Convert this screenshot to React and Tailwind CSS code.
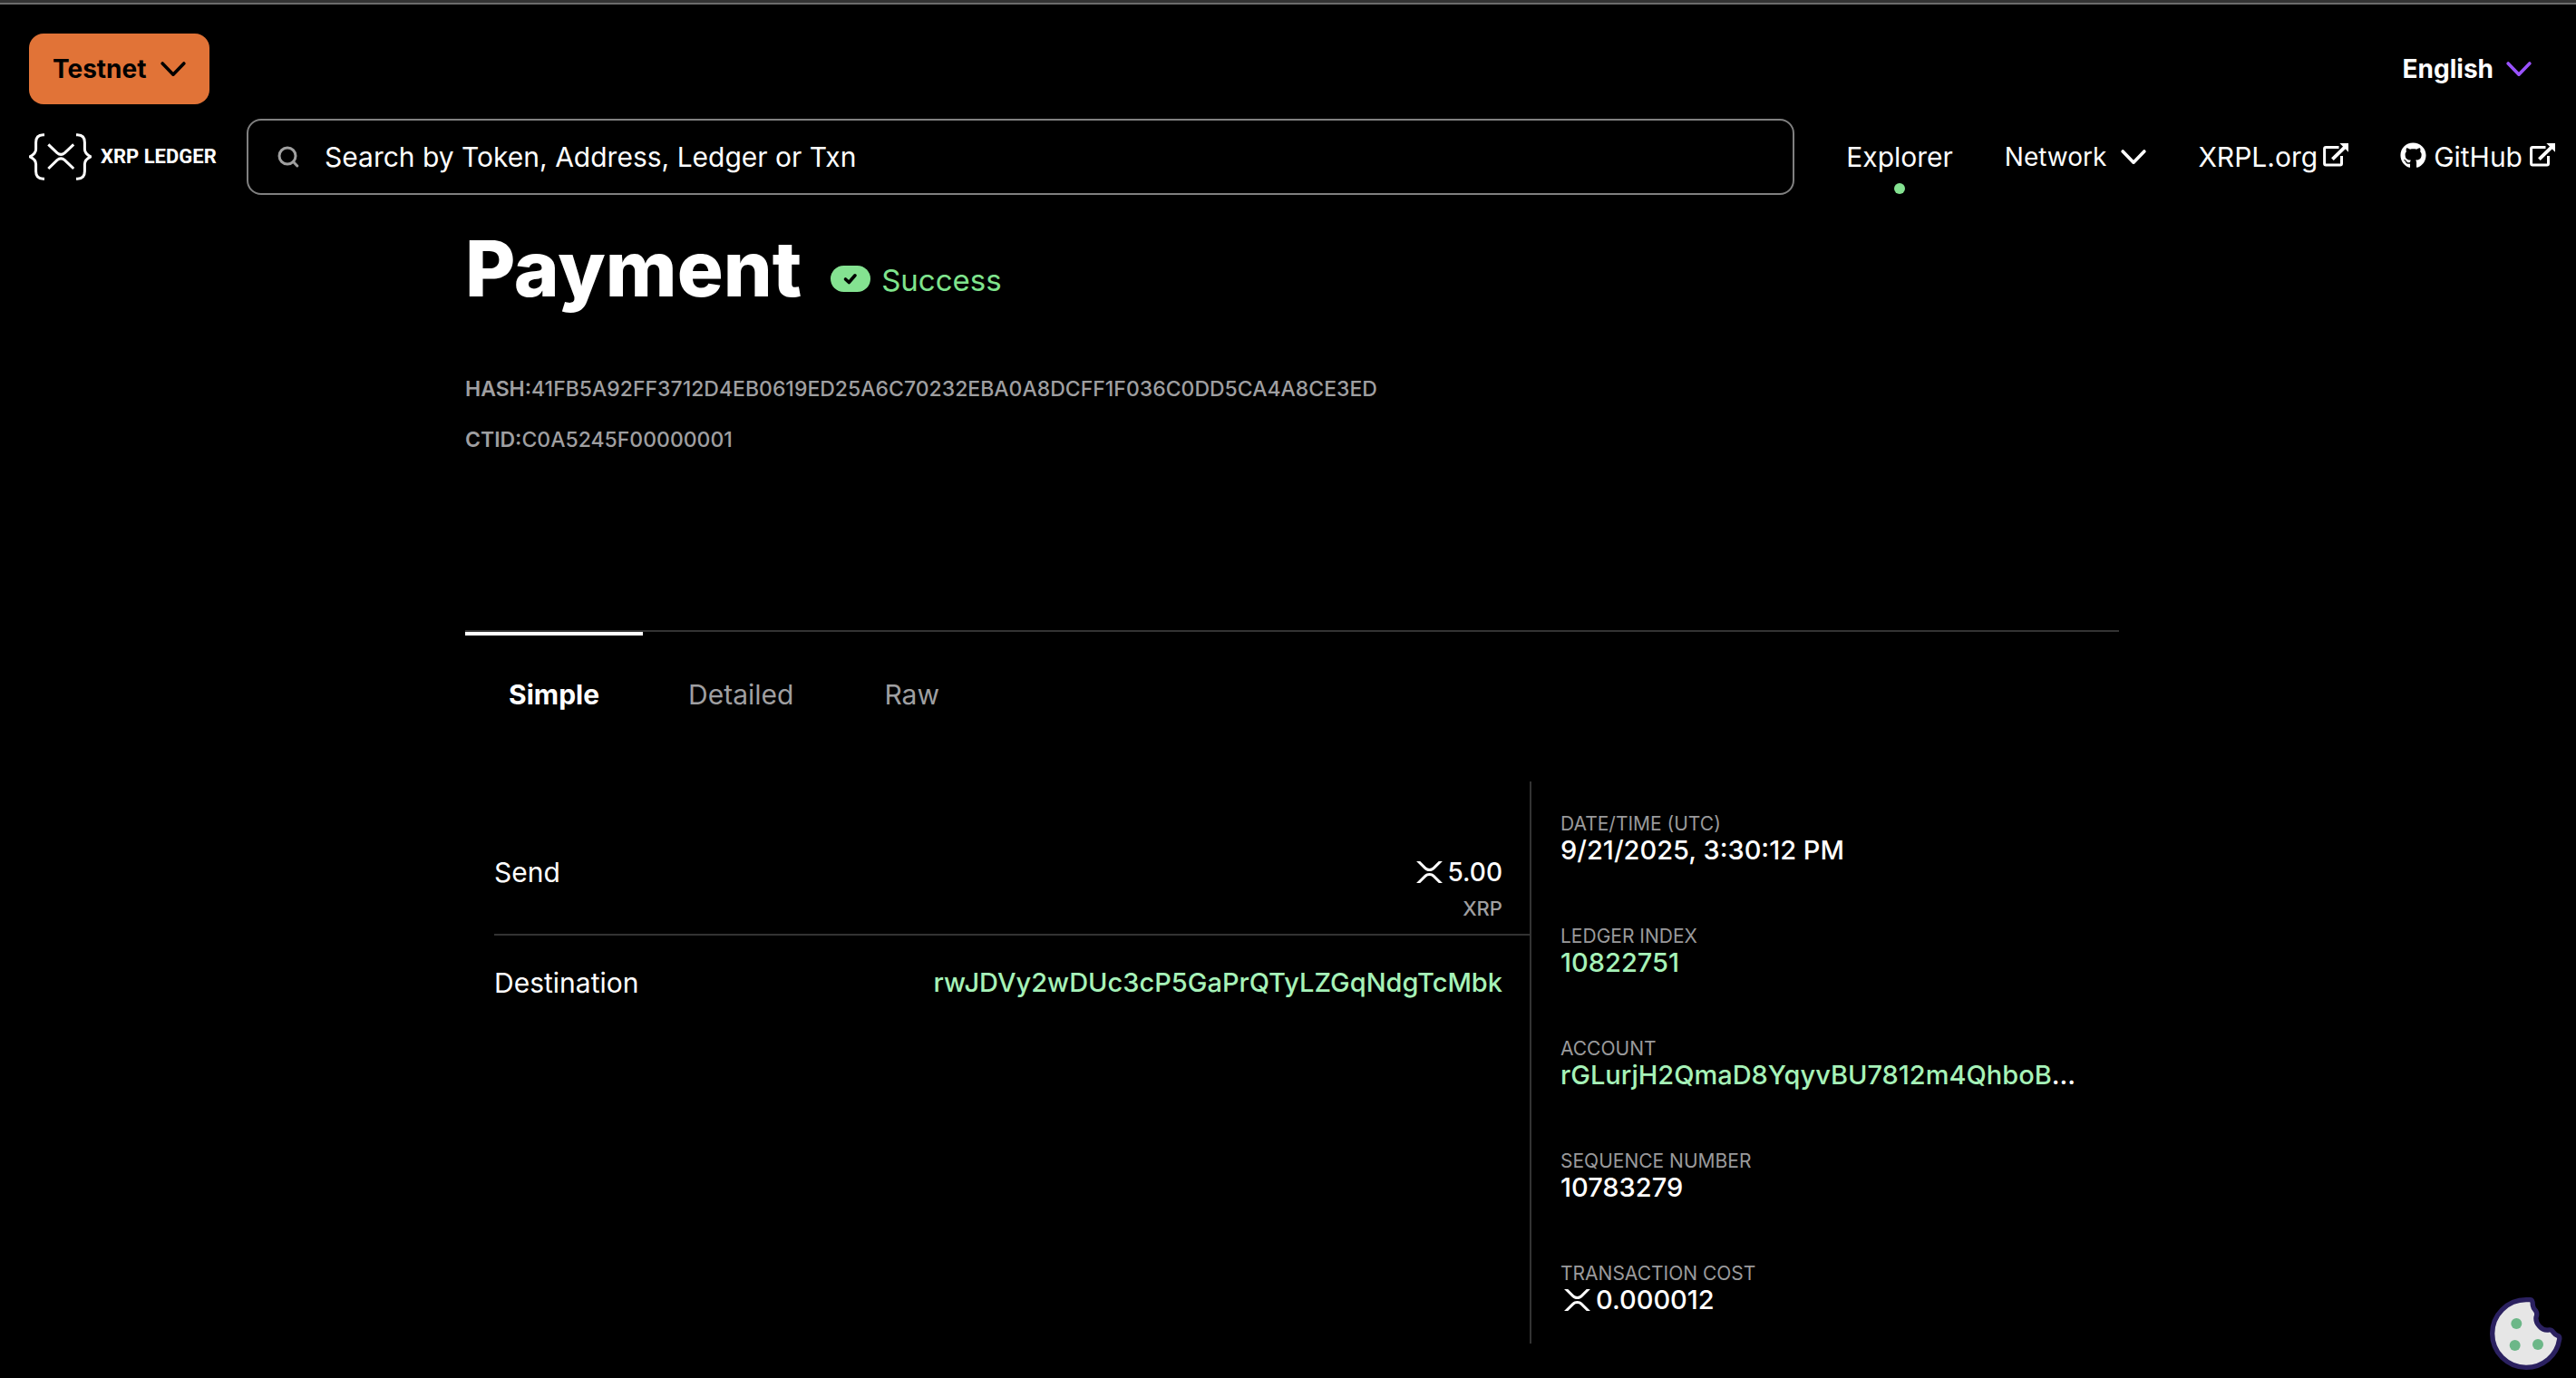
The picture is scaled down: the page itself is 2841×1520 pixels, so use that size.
import React from "react";
import { FaGithub } from "react-icons/fa";

function Chevron({ className = "" }) {
  return (
    <svg viewBox="0 0 28 18" className={`h-[18px] w-7 shrink-0 ${className}`} fill="none" stroke="currentColor" strokeWidth="3.6" strokeLinecap="round" strokeLinejoin="round" aria-hidden="true">
      <path d="M2.2 3 14 15.2 25.8 3" />
    </svg>
  );
}

function ExternalIcon() {
  return (
    <svg viewBox="0 0 28 26" className="mb-1 h-[26px] w-7 shrink-0" fill="none" stroke="currentColor" aria-hidden="true">
      <path d="M17.5 4.4H3.2Q1.6 4.4 1.6 6V22.6Q1.6 24 3.2 24H19Q20.5 24 20.5 22.6V14" strokeWidth="3" />
      <path d="M10.4 17.6 24 4.4" strokeWidth="3.8" />
      <path d="M18.4 0H28V9.8Z" fill="currentColor" stroke="none" />
    </svg>
  );
}

function XrpIcon() {
  return (
    <svg viewBox="0 0 512 424" className="h-6 w-[29px] shrink-0" fill="currentColor" aria-hidden="true">
      <path d="M437,0h74L357,152.48c-55.77,55.19-146.19,55.19-202,0L.94,0H75L192,115.83a91.11,91.11,0,0,0,127.91,0Z" />
      <path d="M74.05,424H0L155,270.58c55.77-55.19,146.19-55.19,202,0L512,424H438L320,307.23a91.11,91.11,0,0,0-127.91,0Z" />
    </svg>
  );
}

function Logo() {
  return (
    <a href="#home" className="flex w-[208px] shrink-0 items-center gap-[10px] text-white">
      <svg viewBox="0 0 69 52" className="h-[52px] w-[69px] shrink-0" fill="none" stroke="currentColor" strokeWidth="3" aria-hidden="true">
        <path d="M17 1.8H15.5Q7.6 2 7.6 10V17.5Q7.6 22.5 1 25.8Q7.6 29 7.6 34V42Q7.6 50 15.5 50.2H17" />
        <path d="M52 1.8H53.5Q61.4 2 61.4 10V17.5Q61.4 22.5 68 25.8Q61.4 29 61.4 34V42Q61.4 50 53.5 50.2H52" />
        <path d="M21.3 12.3 31 21.6Q35.2 25.2 39.4 21.6L49.2 12.3" />
        <path d="M21.3 39 31 29.7Q35.2 26.1 39.4 29.7L49.2 39" />
      </svg>
      <span className="font-[Roboto] text-[22px] leading-7 font-bold whitespace-nowrap">XRP LEDGER</span>
    </a>
  );
}

function Header() {
  return (
    <header className="flex flex-col gap-4 pt-8 pr-[23px] pl-8">
      <div className="flex items-center justify-between pr-[26px]">
        <button type="button" className="flex h-[78px] items-center gap-4 rounded-2xl bg-[#e17337] px-[26px] text-[28px] font-bold text-black">
          Testnet
          <Chevron />
        </button>
        <button type="button" className="flex items-center gap-[14px] text-[28px] font-bold">
          English
          <Chevron className="text-[#9a52ff]" />
        </button>
      </div>
      <div className="flex items-center">
        <Logo />
        <div className="ml-8 flex h-[84px] min-w-0 flex-1 items-center gap-7 rounded-2xl border-2 border-[#808080] px-8">
          <svg viewBox="0 0 24 24" className="size-6 shrink-0" fill="none" stroke="#a0a0a0" strokeWidth="3" strokeLinecap="round" aria-hidden="true">
            <circle cx="11" cy="11" r="9" />
            <path d="M17.5 17.5 21.8 22" />
          </svg>
          <input type="text" aria-label="Search by Token, Address, Ledger or Txn" placeholder="Search by Token, Address, Ledger or Txn" className="min-w-0 flex-1 bg-transparent text-[30px] text-white placeholder-white outline-none" />
        </div>
        <nav className="ml-[57px] flex items-center gap-[57px] text-[30px] leading-9">
          <a href="#explorer" className="relative">
            Explorer
            <span className="absolute top-[47px] left-1/2 size-3 -translate-x-1/2 rounded-full bg-[#84e291]" />
          </a>
          <button type="button" className="flex items-center gap-4 text-[28px]">
            Network
            <Chevron />
          </button>
          <a href="#xrpl" className="flex items-center gap-[6px]">
            XRPL.org
            <ExternalIcon />
          </a>
          <a href="#github" className="flex items-center gap-2">
            <FaGithub className="mb-1 size-[29px]" aria-hidden="true" />
            GitHub
            <ExternalIcon />
          </a>
        </nav>
      </div>
    </header>
  );
}

function Detail({ label, children }) {
  return (
    <div className="h-[124px] pt-8">
      <dt className="text-[21px] leading-[29px] text-[#9a9a9c] uppercase">{label}</dt>
      <dd className="flex items-center text-[29px] leading-[30px] font-medium whitespace-nowrap">{children}</dd>
    </div>
  );
}

function Transaction() {
  return (
    <main className="mx-auto w-full max-w-[1824px]">
      <div className="mt-[34px] flex items-center">
        <h1 className="text-[85px] leading-[96px] font-extrabold">Payment</h1>
        <div className="mt-6 ml-8 flex items-center gap-3 text-[33px] leading-10 text-[#7fe48d]">
          <svg viewBox="0 0 44 29" className="mb-1 h-[29px] w-11" aria-hidden="true">
            <rect width="44" height="29" rx="14.5" fill="#84e291" />
            <path d="M16.5 15 20.3 18.5 27 10.8" fill="none" stroke="#000" strokeWidth="3.6" strokeLinecap="round" strokeLinejoin="round" />
          </svg>
          Success
        </div>
      </div>
      <div className="mt-14 text-[23px] leading-[56px] font-medium text-[#9f9fa1]">
        <div><span className="font-semibold">HASH:</span>41FB5A92FF3712D4EB0619ED25A6C70232EBA0A8DCFF1F036C0DD5CA4A8CE3ED</div>
        <div><span className="font-semibold">CTID:</span>C0A5245F00000001</div>
      </div>

      <div role="tablist" className="mt-[182px] flex border-t-2 border-[#333] text-[30px] leading-9 text-[#9f9fa1]">
        <button type="button" role="tab" aria-selected="true" className="border-t-4 border-white px-12 pt-[47px] font-bold text-white">Simple</button>
        <button type="button" role="tab" aria-selected="false" className="border-t-4 border-transparent px-[50px] pt-[47px]">Detailed</button>
        <button type="button" role="tab" aria-selected="false" className="border-t-4 border-transparent px-[50px] pt-[47px]">Raw</button>
      </div>

      <div className="mt-[78px] grid grid-cols-[1176fr_648fr]">
        <dl className="border-r-2 border-[#333] pl-8 leading-9">
          <div className="flex justify-between border-b-2 border-[#333] pt-[82px] pr-[30px] pb-[14px]">
            <dt className="text-[30px]">Send</dt>
            <dd className="flex flex-col items-end gap-2">
              <span className="flex items-center gap-[6px] text-[28px] font-medium"><XrpIcon />5.00</span>
              <span className="text-[22px] leading-7 font-medium text-[#9f9fa1]">XRP</span>
            </dd>
          </div>
          <div className="flex justify-between pt-[34px] pr-[30px]">
            <dt className="text-[30px]">Destination</dt>
            <dd className="text-[29px] font-medium">
              <a href="#destination" className="text-[#a6f2b8]">rwJDVy2wDUc3cP5GaPrQTyLZGqNdgTcMbk</a>
            </dd>
          </div>
        </dl>
        <dl className="pl-8">
          <Detail label="Date/Time (UTC)">9/21/2025, 3:30:12 PM</Detail>
          <Detail label="Ledger Index"><a href="#ledger" className="text-[#a6f2b8]">10822751</a></Detail>
          <Detail label="Account"><a href="#account" className="text-[#a6f2b8]">rGLurjH2QmaD8YqyvBU7812m4QhboB</a>...</Detail>
          <Detail label="Sequence Number">10783279</Detail>
          <Detail label="Transaction Cost">
            <span className="flex items-center gap-[6px] pl-1"><XrpIcon />0.000012</span>
          </Detail>
        </dl>
      </div>
    </main>
  );
}

function CookieButton() {
  return (
    <button type="button" aria-label="Cookie settings" className="fixed right-[15px] bottom-[9px] size-20">
      <svg viewBox="0 0 240 240" className="size-20" aria-hidden="true">
        <path d="M120 8C58 8 8 58 8 120S58 232 120 232C176 232 222 192 230 139Q232 130 224 127Q216 124 210 116Q204 106 194 108Q176 110 164 96Q151 82 153 66Q158 54 152 45Q143 36 142 26Q142 8 134 8Z" fill="#e6e6e6" stroke="#2b2160" strokeWidth="16" strokeLinejoin="round" />
        <circle cx="88" cy="87" r="18" fill="#6cb788" />
        <circle cx="83" cy="159" r="18" fill="#6cb788" />
        <circle cx="159" cy="156" r="18" fill="#6cb788" />
      </svg>
    </button>
  );
}

export default function App() {
  return (
    <div className="min-h-screen bg-black font-[Inter,sans-serif] text-white">
      <div className="h-[5px] border-b-2 border-[#6b6b6b] bg-[#333]" />
      <Header />
      <div className="pl-[9px]">
        <Transaction />
      </div>
      <CookieButton />
    </div>
  );
}
